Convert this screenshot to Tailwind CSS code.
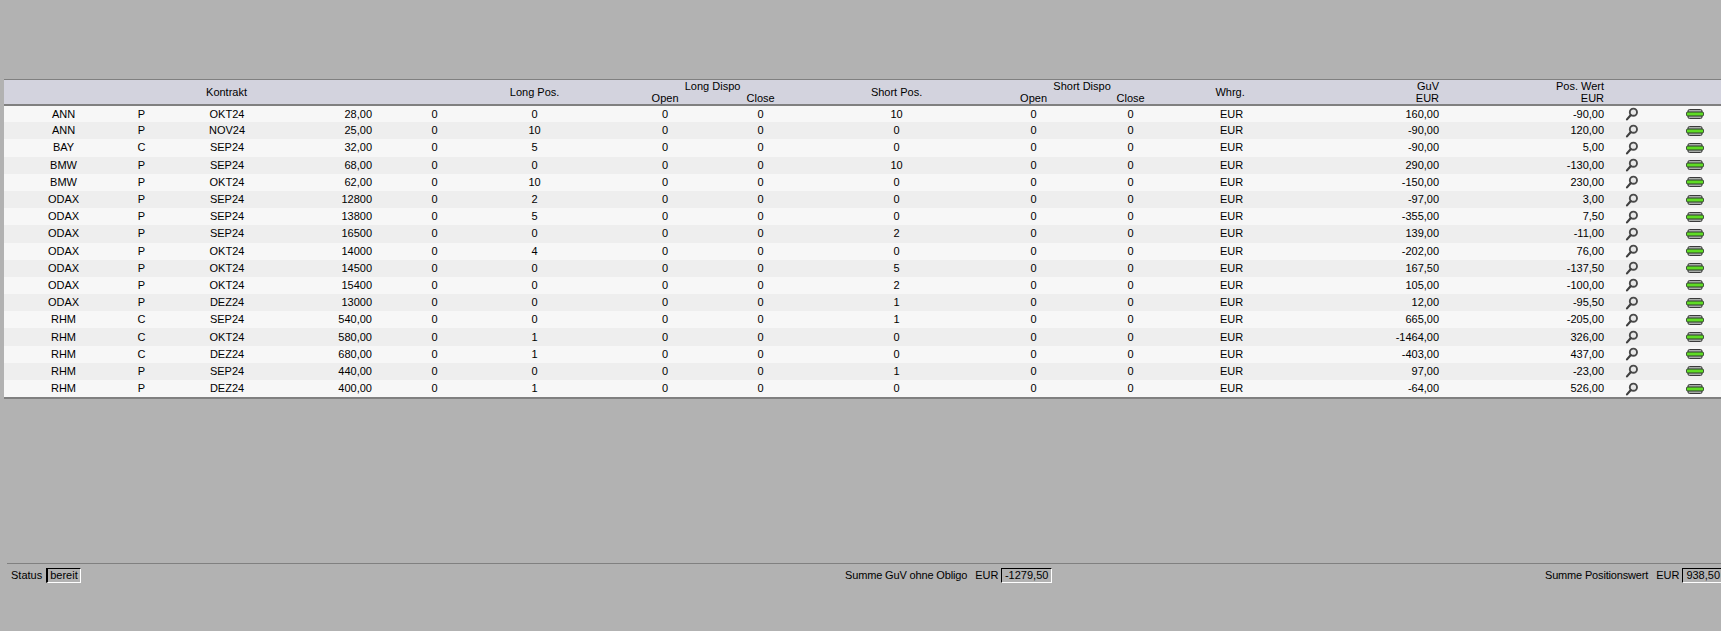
<!DOCTYPE html>
<html lang="de">
<head>
<meta charset="utf-8">
<title>Positionen</title>
<script src="https://cdn.jsdelivr.net/npm/@tailwindcss/browser@4"></script>
</head>
<body class="m-0 h-[631px] w-full overflow-hidden bg-[#b2b2b2] font-['Liberation_Sans',Arial,sans-serif] text-[11px] leading-none text-black">
<svg class="hidden" aria-hidden="true">
  <symbol id="lupe" viewBox="0 0 14 14">
    <circle cx="8.4" cy="5.2" r="3.6" fill="#e8e8e8" stroke="#4a4a4a" stroke-width="1.9"/>
    <path d="M5.6 8.2 L2 12.4" stroke="#404040" stroke-width="2.2" stroke-linecap="round" fill="none"/>
  </symbol>
  <symbol id="gruen" viewBox="0 0 18 10">
    <rect x="2" y="0.5" width="14" height="9" rx="1.5" fill="#a8aca8" stroke="#3a3a3a" stroke-width="1"/>
    <rect x="0.5" y="3" width="17" height="4" rx="1.2" fill="#5fdc24" stroke="#2f3a2f" stroke-width="1"/>
  </symbol>
</svg>

<main class="flex h-full flex-col pt-[79px]">
  <div class="ml-[4px] w-[1726px] border-t border-b-2 border-[#808080]">
    <table class="w-full table-fixed [&_td]:text-center [&_td:nth-child(4)]:text-right [&_td:nth-child(6)]:pr-[45px] [&_td:nth-child(13)]:text-right [&_td:nth-child(14)]:text-right [&_th]:font-normal">
      <colgroup>
        <col class="w-[119px]"><col class="w-[37px]"><col class="w-[134px]"><col class="w-[78px]"><col class="w-[125px]"><col class="w-[120px]"><col class="w-[96px]"><col class="w-[95px]"><col class="w-[177px]"><col class="w-[97px]"><col class="w-[97px]"><col class="w-[105px]"><col class="w-[155px]"><col class="w-[165px]"><col class="w-[56px]"><col class="w-[70px]">
      </colgroup>
      <thead class="border-b-2 border-[#808080] bg-[#d3d3de]">
        <tr class="h-[13px]">
          <th colspan="5" rowspan="2" class="pr-[48px]">Kontrakt</th>
          <th rowspan="2" class="pr-[45px]">Long Pos.</th>
          <th colspan="2">Long Dispo</th>
          <th rowspan="2">Short Pos.</th>
          <th colspan="2">Short Dispo</th>
          <th rowspan="2" class="pr-[3px]">Whrg.</th>
          <th class="text-right">GuV</th>
          <th class="text-right">Pos. Wert</th>
          <th colspan="2" rowspan="2"></th>
        </tr>
        <tr class="h-[12px]">
          <th>Open</th><th>Close</th><th>Open</th><th>Close</th>
          <th class="text-right">EUR</th><th class="text-right">EUR</th>
        </tr>
      </thead>
      <tbody class="[&>tr]:h-[17.2px] [&>tr:nth-child(odd)]:bg-[#f7f7f7] [&>tr:nth-child(even)]:bg-[#eeeeee]">
        <tr><td>ANN</td><td>P</td><td>OKT24</td><td>28,00</td><td>0</td><td>0</td><td>0</td><td>0</td><td>10</td><td>0</td><td>0</td><td>EUR</td><td>160,00</td><td>-90,00</td><td><svg class="mx-auto h-[14px] w-[14px]"><use href="#lupe"/></svg></td><td><svg class="mx-auto h-[10px] w-[18px]"><use href="#gruen"/></svg></td></tr>
        <tr><td>ANN</td><td>P</td><td>NOV24</td><td>25,00</td><td>0</td><td>10</td><td>0</td><td>0</td><td>0</td><td>0</td><td>0</td><td>EUR</td><td>-90,00</td><td>120,00</td><td><svg class="mx-auto h-[14px] w-[14px]"><use href="#lupe"/></svg></td><td><svg class="mx-auto h-[10px] w-[18px]"><use href="#gruen"/></svg></td></tr>
        <tr><td>BAY</td><td>C</td><td>SEP24</td><td>32,00</td><td>0</td><td>5</td><td>0</td><td>0</td><td>0</td><td>0</td><td>0</td><td>EUR</td><td>-90,00</td><td>5,00</td><td><svg class="mx-auto h-[14px] w-[14px]"><use href="#lupe"/></svg></td><td><svg class="mx-auto h-[10px] w-[18px]"><use href="#gruen"/></svg></td></tr>
        <tr><td>BMW</td><td>P</td><td>SEP24</td><td>68,00</td><td>0</td><td>0</td><td>0</td><td>0</td><td>10</td><td>0</td><td>0</td><td>EUR</td><td>290,00</td><td>-130,00</td><td><svg class="mx-auto h-[14px] w-[14px]"><use href="#lupe"/></svg></td><td><svg class="mx-auto h-[10px] w-[18px]"><use href="#gruen"/></svg></td></tr>
        <tr><td>BMW</td><td>P</td><td>OKT24</td><td>62,00</td><td>0</td><td>10</td><td>0</td><td>0</td><td>0</td><td>0</td><td>0</td><td>EUR</td><td>-150,00</td><td>230,00</td><td><svg class="mx-auto h-[14px] w-[14px]"><use href="#lupe"/></svg></td><td><svg class="mx-auto h-[10px] w-[18px]"><use href="#gruen"/></svg></td></tr>
        <tr><td>ODAX</td><td>P</td><td>SEP24</td><td>12800</td><td>0</td><td>2</td><td>0</td><td>0</td><td>0</td><td>0</td><td>0</td><td>EUR</td><td>-97,00</td><td>3,00</td><td><svg class="mx-auto h-[14px] w-[14px]"><use href="#lupe"/></svg></td><td><svg class="mx-auto h-[10px] w-[18px]"><use href="#gruen"/></svg></td></tr>
        <tr><td>ODAX</td><td>P</td><td>SEP24</td><td>13800</td><td>0</td><td>5</td><td>0</td><td>0</td><td>0</td><td>0</td><td>0</td><td>EUR</td><td>-355,00</td><td>7,50</td><td><svg class="mx-auto h-[14px] w-[14px]"><use href="#lupe"/></svg></td><td><svg class="mx-auto h-[10px] w-[18px]"><use href="#gruen"/></svg></td></tr>
        <tr><td>ODAX</td><td>P</td><td>SEP24</td><td>16500</td><td>0</td><td>0</td><td>0</td><td>0</td><td>2</td><td>0</td><td>0</td><td>EUR</td><td>139,00</td><td>-11,00</td><td><svg class="mx-auto h-[14px] w-[14px]"><use href="#lupe"/></svg></td><td><svg class="mx-auto h-[10px] w-[18px]"><use href="#gruen"/></svg></td></tr>
        <tr><td>ODAX</td><td>P</td><td>OKT24</td><td>14000</td><td>0</td><td>4</td><td>0</td><td>0</td><td>0</td><td>0</td><td>0</td><td>EUR</td><td>-202,00</td><td>76,00</td><td><svg class="mx-auto h-[14px] w-[14px]"><use href="#lupe"/></svg></td><td><svg class="mx-auto h-[10px] w-[18px]"><use href="#gruen"/></svg></td></tr>
        <tr><td>ODAX</td><td>P</td><td>OKT24</td><td>14500</td><td>0</td><td>0</td><td>0</td><td>0</td><td>5</td><td>0</td><td>0</td><td>EUR</td><td>167,50</td><td>-137,50</td><td><svg class="mx-auto h-[14px] w-[14px]"><use href="#lupe"/></svg></td><td><svg class="mx-auto h-[10px] w-[18px]"><use href="#gruen"/></svg></td></tr>
        <tr><td>ODAX</td><td>P</td><td>OKT24</td><td>15400</td><td>0</td><td>0</td><td>0</td><td>0</td><td>2</td><td>0</td><td>0</td><td>EUR</td><td>105,00</td><td>-100,00</td><td><svg class="mx-auto h-[14px] w-[14px]"><use href="#lupe"/></svg></td><td><svg class="mx-auto h-[10px] w-[18px]"><use href="#gruen"/></svg></td></tr>
        <tr><td>ODAX</td><td>P</td><td>DEZ24</td><td>13000</td><td>0</td><td>0</td><td>0</td><td>0</td><td>1</td><td>0</td><td>0</td><td>EUR</td><td>12,00</td><td>-95,50</td><td><svg class="mx-auto h-[14px] w-[14px]"><use href="#lupe"/></svg></td><td><svg class="mx-auto h-[10px] w-[18px]"><use href="#gruen"/></svg></td></tr>
        <tr><td>RHM</td><td>C</td><td>SEP24</td><td>540,00</td><td>0</td><td>0</td><td>0</td><td>0</td><td>1</td><td>0</td><td>0</td><td>EUR</td><td>665,00</td><td>-205,00</td><td><svg class="mx-auto h-[14px] w-[14px]"><use href="#lupe"/></svg></td><td><svg class="mx-auto h-[10px] w-[18px]"><use href="#gruen"/></svg></td></tr>
        <tr><td>RHM</td><td>C</td><td>OKT24</td><td>580,00</td><td>0</td><td>1</td><td>0</td><td>0</td><td>0</td><td>0</td><td>0</td><td>EUR</td><td>-1464,00</td><td>326,00</td><td><svg class="mx-auto h-[14px] w-[14px]"><use href="#lupe"/></svg></td><td><svg class="mx-auto h-[10px] w-[18px]"><use href="#gruen"/></svg></td></tr>
        <tr><td>RHM</td><td>C</td><td>DEZ24</td><td>680,00</td><td>0</td><td>1</td><td>0</td><td>0</td><td>0</td><td>0</td><td>0</td><td>EUR</td><td>-403,00</td><td>437,00</td><td><svg class="mx-auto h-[14px] w-[14px]"><use href="#lupe"/></svg></td><td><svg class="mx-auto h-[10px] w-[18px]"><use href="#gruen"/></svg></td></tr>
        <tr><td>RHM</td><td>P</td><td>SEP24</td><td>440,00</td><td>0</td><td>0</td><td>0</td><td>0</td><td>1</td><td>0</td><td>0</td><td>EUR</td><td>97,00</td><td>-23,00</td><td><svg class="mx-auto h-[14px] w-[14px]"><use href="#lupe"/></svg></td><td><svg class="mx-auto h-[10px] w-[18px]"><use href="#gruen"/></svg></td></tr>
        <tr><td>RHM</td><td>P</td><td>DEZ24</td><td>400,00</td><td>0</td><td>1</td><td>0</td><td>0</td><td>0</td><td>0</td><td>0</td><td>EUR</td><td>-64,00</td><td>526,00</td><td><svg class="mx-auto h-[14px] w-[14px]"><use href="#lupe"/></svg></td><td><svg class="mx-auto h-[10px] w-[18px]"><use href="#gruen"/></svg></td></tr>
      </tbody>
    </table>
  </div>

  <footer class="ml-[7px] mt-[164px] grid w-[1730px] grid-cols-[834px_700px_1fr] border-t border-[#808080] pt-[4px] pl-[4px]">
    <div class="flex items-center gap-[4px]">
      <span>Status</span>
      <span class="border border-t-black border-l-2 border-l-black border-r-white border-b-white px-[2px] py-[1px]">bereit</span>
    </div>
    <div class="flex items-center">
      <span class="tracking-[-0.15px]">Summe GuV ohne Obligo</span><span class="ml-[8px]">EUR</span>
      <span class="ml-[3px] border border-t-black border-l-black border-r-white border-b-white px-[2.5px] py-[1px]">-1279,50</span>
    </div>
    <div class="flex items-center">
      <span class="tracking-[-0.17px]">Summe Positionswert</span><span class="ml-[8px]">EUR</span>
      <span class="ml-[3px] border border-t-black border-l-black border-r-white border-b-white px-[3px] py-[1px]">938,50</span>
    </div>
  </footer>
</main>
</body>
</html>
